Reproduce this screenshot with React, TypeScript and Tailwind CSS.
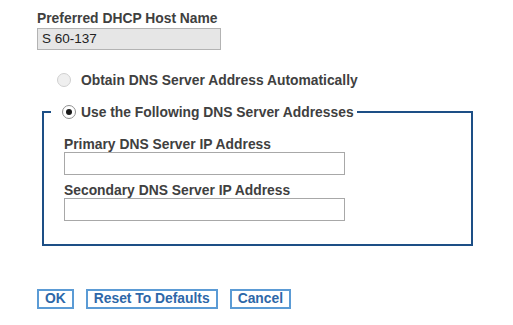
const labelCls = "block text-[13.85px] leading-[16px] font-bold text-[#404040]"

const Radio = ({ checked }: { checked: boolean }) =>
  checked ? (
    <span className="flex h-[14px] w-[14px] shrink-0 items-center justify-center rounded-full border-[1.5px] border-[#8f8f8f] bg-white">
      <span className="h-[6px] w-[6px] rounded-full bg-[#1a1a1a]" />
    </span>
  ) : (
    <span className="h-[14px] w-[14px] shrink-0 rounded-full border border-[#d0d0d0] bg-[#efefef]" />
  )

export default function App() {
  return (
    <div className="min-h-[325px] bg-white pl-[37px] pt-[10px] font-['Liberation_Sans',Arial,sans-serif]">
      <label className={labelCls}>Preferred DHCP Host Name</label>
      <div className="mt-[2px] flex h-[22px] w-[184px] items-center border border-[#b3b3b3] bg-[#e6e6e6] pl-[4px] text-[13.5px] text-[#222]">
        S 60-137
      </div>

      <div className="ml-[20px] mt-[22px] flex h-[16px] items-center gap-[10px]">
        <Radio checked={false} />
        <span className={labelCls}>Obtain DNS Server Address Automatically</span>
      </div>

      <fieldset className="ml-[5px] mt-[16px] w-[431px] border-2 border-[#1d4f86] pb-[23px] pl-[20px]">
        <legend className="-ml-[13px] flex h-[16px] items-center gap-[5px] pl-[11px] pr-[3px]">
          <Radio checked />
          <span className={labelCls}>Use the Following DNS Server Addresses</span>
        </legend>
        <div className="pt-[16px]">
          <label className={labelCls}>Primary DNS Server IP Address</label>
          <input className="block h-[23px] w-[281px] border border-[#a8a8a8] bg-white outline-none" />
          <label className={labelCls + " mt-[7px]"}>Secondary DNS Server IP Address</label>
          <input className="block h-[23px] w-[281px] border border-[#a8a8a8] bg-white outline-none" />
        </div>
      </fieldset>

      <div className="mt-[43px] flex gap-[12px]">
        {["OK", "Reset To Defaults", "Cancel"].map((t) => (
          <button
            key={t}
            className="flex h-[20px] items-center border-2 border-[#5b9bd5] bg-white px-[6px] text-[13.85px] font-bold leading-none text-[#2d67a8]"
          >
            {t}
          </button>
        ))}
      </div>
    </div>
  )
}
